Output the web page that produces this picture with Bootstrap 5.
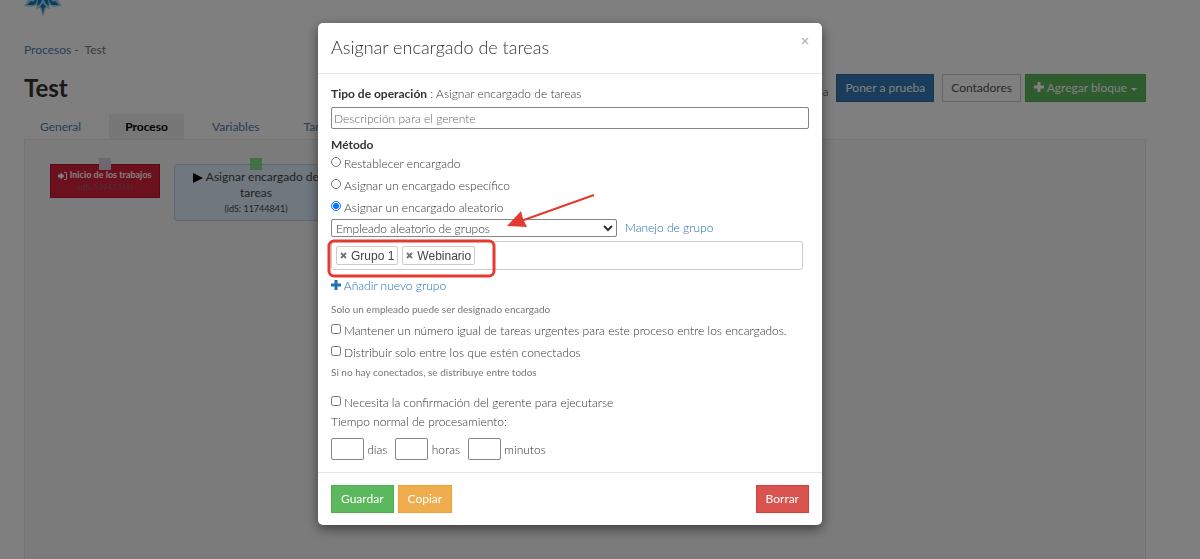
<!DOCTYPE html>
<html lang="es">
<head>
<meta charset="utf-8">
<meta name="viewport" content="width=device-width, initial-scale=1">
<title>Asignar encargado de tareas</title>
<link href="https://cdn.jsdelivr.net/npm/bootstrap@5.3.0/dist/css/bootstrap.min.css" rel="stylesheet">
<style>
  :root { --ink: #333; --link: #1f6fb5; }
  body { font-family: Lato, "Open Sans", sans-serif; font-size: 12px; font-weight: 300; line-height: 16px; color: var(--ink); background: #fff; }
  a { color: var(--link); text-decoration: none; }
  .page { --link: #4a80b5; padding: 0 54px 0 24px; }
  .page nav, .page-tabs { font-weight: 400; }
  .page nav { color: #777; }
  .brand { height: 42px; }
  .brand svg { display: block; }
  .page-head { margin-top: 16px; height: 28px; }
  .page-head h1 { font-size: 24px; line-height: 28px; font-weight: 700; color: #333; }
  .btn { --bs-btn-font-size: 12px; --bs-btn-font-weight: 400; --bs-btn-line-height: 16px; --bs-btn-padding-x: 9px; --bs-btn-padding-y: 5px; --bs-btn-border-radius: 0; }
  .page-head .btn { --bs-btn-padding-x: 8px; }
  .btn-run { --bs-btn-bg: #337ab7; --bs-btn-border-color: #2e6da4; --bs-btn-color: #fff; }
  .btn-plain { --bs-btn-bg: #fff; --bs-btn-border-color: #ccc; --bs-btn-color: #555; }
  .btn-ok { --bs-btn-bg: #5cb85c; --bs-btn-border-color: #4cae4c; --bs-btn-color: #fff; }
  .btn-copy { --bs-btn-bg: #f0ad4e; --bs-btn-border-color: #eea236; --bs-btn-color: #fff; }
  .btn-del { --bs-btn-bg: #d9534f; --bs-btn-border-color: #d43f3a; --bs-btn-color: #fff; }
  .dropdown-toggle::after { vertical-align: 1px; margin-left: 4px; }
  .page-tabs { margin-top: 12px; }
  .page-tabs .nav-link { padding: 4px 16px; line-height: 17px; color: var(--link); }
  .page-tabs .nav-item + .nav-item { margin-left: 12px; }
  .page-tabs .nav-link.active { background: #eee; color: #000; font-weight: 700; }
  .board { background: #f7f7f7; border: 1px solid #e9e9e9; border-bottom: 0; }
  .node { position: absolute; top: 24px; text-align: center; }
  .node-start { left: 25px; width: 110px; height: 34px; background: #d9213b; border: 1px solid #b3152b; color: #fff; font-size: 9px; font-weight: 700; line-height: 12px; padding-top: 4px; }
  .node-start small { display: block; font-size: 8px; font-weight: 400; color: #8f6066; }
  .node-task { left: 149px; width: 164px; height: 57px; background: #e1effe; border: 1px solid #c0cfdf; border-radius: 3px; padding: 4px 8px; line-height: 16px; color: #444; font-weight: 400; }
  .node-task small { display: block; font-size: 9px; }
  .pin { position: absolute; top: -7px; left: 50%; width: 12px; height: 12px; margin-left: -6px; background: #d8d0dc; }
  .pin-go { background: #8be08b; }

  .modal { padding-right: 60px; }
  .modal-dialog { max-width: 504px; margin-top: 23px; }
  .modal-content { border: 0; border-radius: 5px; color: var(--ink); box-shadow: 0 4px 12px rgba(0,0,0,.5); }
  .modal-header { padding: 13px 13px 14px; align-items: flex-start; border-color: #e5e5e5; height: 51px; }
  .modal-title { font-size: 18px; line-height: 22px; font-weight: 300; }
  .close-x { border: 0; background: none; padding: 0; width: 8px; height: 10px; line-height: 0; }
  .modal-body { padding: 12px 13px; }
  .modal-body b { font-weight: 700; }
  .box { border: 1px solid #858585; border-radius: 2px; color: var(--ink); background: #fff; font-weight: 300; }
  .box-desc { height: 22px; width: 100%; padding: 1px 2px; margin-top: 5px; }
  .box-desc::placeholder { color: #666; opacity: 1; }
  .opt { display: flex; height: 22px; align-items: center; gap: 3px; }
  .opt input { width: 10px; height: 10px; margin: 0 0 4px; }
  .pick { width: 286px; height: 18px; padding: 0; }
  .tags { max-width: 472px; height: 29px; border: 1px solid #ccc; border-radius: 3px; padding: 4px; margin-top: 4px; font-family: "Liberation Sans", Arial, sans-serif; color: #444; font-weight: 400; }
  .tag-item { display: flex; align-items: center; gap: 4px; height: 19px; border: 1px solid #ccc; border-radius: 2px; padding: 0 3px; background: #fff; }
  .tag-item button { border: 0; background: none; padding: 0; line-height: 0; }
  .hint { font-size: 10px; line-height: 16px; color: #777; font-weight: 400; }
  .lead-hint { margin-top: 7px; margin-bottom: 3px; }
  .sep { margin-top: 12px; }
  .box-num { width: 33px; height: 22px; }
  .plus { vertical-align: 0; }
  .modal-footer { padding: 12px 13px; border-color: #e5e5e5; }
  .modal-footer > * { margin: 0; }
  .marks { position: absolute; left: 9px; top: 168px; width: 280px; height: 90px; pointer-events: none; }
</style>
</head>
<body class="modal-open overflow-hidden">
<div class="page vh-100 d-flex flex-column">
  <header class="brand">
    <svg width="38" height="18" viewBox="0 0 38 18" fill="#0a7ac2">
      <path d="M0 6 4 0h30l4 6-8 1-5-2 1 4-4-1-3 9-3-9-4 1 1-4-5 2z" opacity=".35"/>
      <path d="M3 5 7 1l2 1 2-2h2l-1 3-2 2zM35 5 31 1l-2 1-2-2h-2l1 3 2 2zM14 0h4l-2 4-3 2zM24 0h-4l2 4 3 2zM19 3l3 4-2 1-1 6-1-6-2-1z"/>
    </svg>
  </header>
  <nav><a href="#">Procesos</a> -&nbsp; <span>Test</span></nav>
  <div class="page-head d-flex align-items-center">
    <h1 class="mb-0">Test</h1>
    <span class="ms-auto me-2 pt-2">Prueba</span>
    <button class="btn btn-run">Poner a prueba</button>
    <button class="btn btn-plain ms-2">Contadores</button>
    <button class="btn btn-ok ms-1 dropdown-toggle"><svg class="plus" width="10" height="10" viewBox="0 0 10 10" fill="currentColor"><path d="M3.500 0h3v3.500H10v3H6.500V10h-3V6.500H0v-3h3.500z"/></svg> Agregar bloque</button>
  </div>
  <ul class="nav page-tabs">
    <li class="nav-item"><a class="nav-link" href="#">General</a></li>
    <li class="nav-item"><a class="nav-link active" href="#">Proceso</a></li>
    <li class="nav-item"><a class="nav-link" href="#">Variables</a></li>
    <li class="nav-item"><a class="nav-link" href="#">Tareas</a></li>
  </ul>
  <main class="board flex-fill position-relative">
    <div class="node node-start"><span class="pin"></span><svg width="9" height="8" viewBox="0 0 9 8" fill="currentColor"><path d="M0 2.500h2.500V.5L6.500 4 2.500 7.500v-2H0zM6 0h1.500Q9 0 9 1.500v5Q9 8 7.500 8H6V7h1.500q.5 0 .5-.5v-5Q8 1 7.500 1H6z"/></svg> Inicio de los trabajos<small>(idS: 10947366)</small></div>
    <div class="node node-task"><span class="pin pin-go"></span><svg width="10" height="10" viewBox="0 0 10 10"><path d="M0 0 10 5 0 10z"/></svg> Asignar encargado de tareas<small>(idS: 11744841)</small></div>
  </main>
</div>

<div class="modal-backdrop show"></div>
<div class="modal show d-block" tabindex="-1" role="dialog" aria-labelledby="dlgTitle">
  <div class="modal-dialog">
    <form class="modal-content">
      <div class="modal-header">
        <h4 class="modal-title" id="dlgTitle">Asignar encargado de tareas</h4>
        <button type="button" class="close-x ms-auto" aria-label="Cerrar"><svg width="8" height="8" viewBox="0 0 8 8" stroke="#bbb" stroke-width="1.500"><path d="M1 1l6 6M7 1 1 7"/></svg></button>
      </div>
      <div class="modal-body">
        <label class="d-block" for="desc"><b>Tipo de operación</b> : Asignar encargado de tareas</label>
        <input class="box box-desc d-block" id="desc" type="text" placeholder="Descripción para el gerente">
        <div class="mt-2"><b>Método</b></div>
        <label class="opt"><input type="radio" name="metodo">Restablecer encargado</label>
        <label class="opt"><input type="radio" name="metodo">Asignar un encargado específico</label>
        <label class="opt"><input type="radio" name="metodo" checked>Asignar un encargado aleatorio</label>
        <div class="d-flex align-items-center gap-2">
          <select class="box pick" aria-label="Modo"><option>Empleado aleatorio de grupos</option></select>
          <a href="#">Manejo de grupo</a>
        </div>
        <div class="tags d-flex gap-1">
          <span class="tag-item"><button type="button" aria-label="Quitar"><svg width="7" height="7" viewBox="0 0 7 7" stroke="#777" stroke-width="2"><path d="M1 1l5 5M6 1 1 6"/></svg></button>Grupo 1</span>
          <span class="tag-item"><button type="button" aria-label="Quitar"><svg width="7" height="7" viewBox="0 0 7 7" stroke="#777" stroke-width="2"><path d="M1 1l5 5M6 1 1 6"/></svg></button>Webinario</span>
        </div>
        <a class="d-block mt-2" href="#"><svg class="plus" width="10" height="10" viewBox="0 0 10 10" fill="currentColor"><path d="M3.500 0h3v3.500H10v3H6.500V10h-3V6.500H0v-3h3.500z"/></svg> Añadir nuevo grupo</a>
        <div class="hint lead-hint">Solo un empleado puede ser designado encargado</div>
        <label class="opt"><input type="checkbox">Mantener un número igual de tareas urgentes para este proceso entre los encargados.</label>
        <label class="opt"><input type="checkbox">Distribuir solo entre los que estén conectados</label>
        <div class="hint">Si no hay conectados, se distribuye entre todos</div>
        <label class="opt sep"><input type="checkbox">Necesita la confirmación del gerente para ejecutarse</label>
        <div>Tiempo normal de procesamiento:</div>
        <div class="d-flex align-items-center gap-2 mt-2">
          <label><input class="box box-num" type="text"> días</label>
          <label><input class="box box-num" type="text"> horas</label>
          <label><input class="box box-num" type="text"> minutos</label>
        </div>
      </div>
      <div class="modal-footer justify-content-start gap-1">
        <button type="button" class="btn btn-ok">Guardar</button>
        <button type="button" class="btn btn-copy">Copiar</button>
        <button type="button" class="btn btn-del ms-auto">Borrar</button>
      </div>
      <svg class="marks" viewBox="0 0 280 90" fill="none" stroke="#e53a30">
        <rect x="2" y="50" width="165" height="35" rx="5" stroke-width="3"/>
        <path d="M267 4 194 30" stroke-width="2"/>
        <path d="M180 35 194 20 196 28 200 36z" fill="#e53a30" stroke="none"/>
      </svg>
    </form>
  </div>
</div>
<script src="https://cdn.jsdelivr.net/npm/bootstrap@5.3.0/dist/js/bootstrap.bundle.min.js"></script>
</body>
</html>
